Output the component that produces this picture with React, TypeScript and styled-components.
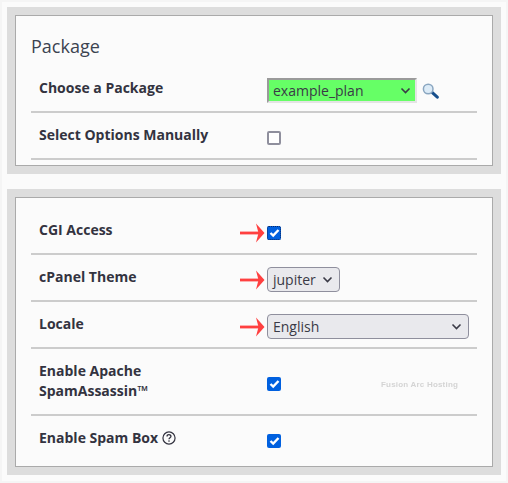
import { createGlobalStyle } from 'styled-components'
import styled from 'styled-components'
import { ReactNode } from 'react'

const GlobalStyle = createGlobalStyle`
    html, body {
        margin: 0;
        padding: 0;
        background: #fbfbfb;
    }
`

const Page = styled.div`
    position: relative;
    width: 508px;
    height: 483px;
    box-sizing: border-box;
    padding: 5px;
    border: 2px solid #f5f5f5;
    display: flex;
    flex-direction: column;
    gap: 15px;
    font-family: 'Open Sans', sans-serif;
    color: #333340;
`

const Frame = styled.div<{ $height: number }>`
    height: ${(p) => p.$height}px;
    box-sizing: border-box;
    padding: 8px;
    background: #dddddd;
`

const Panel = styled.div`
    height: 100%;
    box-sizing: border-box;
    padding: 0 15px;
    background: #fbfbfb;
    border: 1px solid #aaaaaa;
    overflow: hidden;
`

const Heading = styled.h2`
    margin: 0;
    padding: 18px 0 0;
    height: 50px;
    box-sizing: border-box;
    font-size: 18px;
    line-height: 24px;
    font-weight: 400;
    color: #3b4350;
`

const Row = styled.div<{ $height: number; $last?: boolean }>`
    height: ${(p) => p.$height}px;
    box-sizing: border-box;
    display: flex;
    border-bottom: ${(p) => (p.$last ? 'none' : '2px solid #cccccc')};
`

const Label = styled.div<{ $top?: number }>`
    width: 228px;
    margin-right: 8px;
    padding: ${(p) => p.$top ?? 12}px 30px 0 8px;
    box-sizing: border-box;
    font-size: 14px;
    line-height: 20px;
    font-weight: 700;
    color: #333340;
`

const Field = styled.div<{ $top?: number }>`
    flex: 1;
    display: flex;
    align-items: center;
    gap: 5px;
    padding-top: ${(p) => p.$top ?? 5}px;
`

const Select = styled.div<{ $width: number; $plan?: boolean }>`
    width: ${(p) => p.$width}px;
    height: 25px;
    box-sizing: border-box;
    display: flex;
    align-items: center;
    justify-content: space-between;
    padding: 0 ${(p) => (p.$plan ? 4 : 6)}px 0 ${(p) => (p.$plan ? 4 : 5)}px;
    font-size: 14px;
    color: #3a3a46;
    background: ${(p) => (p.$plan ? '#66ff66' : '#e9e9ed')};
    border-radius: ${(p) => (p.$plan ? '0' : '4px')};
    border: ${(p) => (p.$plan ? '2px solid' : '1px solid')};
    border-color: ${(p) => (p.$plan ? '#9a9a9a #e4e4e4 #e4e4e4 #9a9a9a' : '#8f8f9d')};
`

const Check = styled.span<{ $checked?: boolean; $focused?: boolean }>`
    width: 14px;
    height: 14px;
    box-sizing: border-box;
    border-radius: 2px;
    display: flex;
    align-items: center;
    justify-content: center;
    background: ${(p) => (p.$checked ? '#0060df' : '#ffffff')};
    border: ${(p) => (p.$checked ? 'none' : '2px solid #8f8f9d')};
    outline: ${(p) => (p.$focused ? '1px dotted #0a2a66' : 'none')};
    outline-offset: -1px;
`

const ArrowSlot = styled.span`
    position: absolute;
    margin-left: -27px;
    display: flex;
`

const FieldWithArrow = styled(Field)`
    position: relative;
`

const Watermark = styled.span`
    position: absolute;
    left: 379px;
    top: 378px;
    font-family: 'Liberation Sans', sans-serif;
    font-size: 8px;
    letter-spacing: 0.2px;
    font-weight: 700;
    color: #d4d4d4;
    filter: blur(0.6px);
`

const Chevron = () => (
    <svg width="11" height="7" viewBox="0 0 11 7" fill="none">
        <path d="M1.5 1.5 L5.5 5.5 L9.5 1.5" stroke="#3a3a46" strokeWidth="1.6" />
    </svg>
)

const Tick = () => (
    <svg width="11" height="10" viewBox="0 0 11 10" fill="none">
        <path d="M1.5 5 L4.2 7.6 L9.5 2" stroke="#ffffff" strokeWidth="2.4" />
    </svg>
)

const Arrow = () => (
    <svg width="25" height="20" viewBox="0 0 25 20">
        <rect x="0" y="8.6" width="19" height="2.8" fill="#ff4040" />
        <path d="M16 0.5 L24.5 10 L16 19.5 L18.5 10 Z" fill="#ff4040" />
    </svg>
)

const Magnifier = () => (
    <svg width="17" height="16" viewBox="0 0 17 16">
        <path d="M9.8 9.2 L15.3 14.2" stroke="#174f8c" strokeWidth="3" strokeLinecap="round" />
        <circle cx="6.2" cy="6" r="4.8" fill="#dcebf7" stroke="#8aa6c0" strokeWidth="1.5" />
    </svg>
)

const HelpIcon = () => (
    <svg width="14" height="14" viewBox="0 0 15 15" fill="none" style={{ verticalAlign: '-2px', marginLeft: 4 }}>
        <circle cx="7.5" cy="7.5" r="6.5" stroke="#333340" strokeWidth="1.3" />
        <path d="M5.4 5.8 C5.4 3.4 9.6 3.4 9.6 5.7 C9.6 7.2 7.5 7.2 7.5 8.9" stroke="#333340" strokeWidth="1.4" />
        <rect x="6.8" y="10" width="1.4" height="1.5" fill="#333340" />
    </svg>
)

interface ArrowFieldProps {
    top?: number
    children: ReactNode
}

const ArrowField = ({ top, children }: ArrowFieldProps) => (
    <FieldWithArrow $top={top}>
        <ArrowSlot><Arrow /></ArrowSlot>
        {children}
    </FieldWithArrow>
)

const App = () => (
    <Page>
        <GlobalStyle />
        <Frame $height={167}>
            <Panel>
                <Heading>Package</Heading>
                <Row $height={47}>
                    <Label>Choose a Package</Label>
                    <Field $top={4}>
                        <Select $width={150} $plan>example_plan<Chevron /></Select>
                        <Magnifier />
                    </Field>
                </Row>
                <Row $height={47}>
                    <Label>Select Options Manually</Label>
                    <Field><Check /></Field>
                </Row>
            </Panel>
        </Frame>
        <Frame $height={286}>
            <Panel>
                <Row $height={57}>
                    <Label $top={22}>CGI Access</Label>
                    <ArrowField top={15}><Check $checked $focused><Tick /></Check></ArrowField>
                </Row>
                <Row $height={47}>
                    <Label>cPanel Theme</Label>
                    <ArrowField top={4}><Select $width={73}>jupiter<Chevron /></Select></ArrowField>
                </Row>
                <Row $height={47}>
                    <Label>Locale</Label>
                    <ArrowField top={4}><Select $width={202}>English<Chevron /></Select></ArrowField>
                </Row>
                <Row $height={67}>
                    <Label>Enable Apache SpamAssassin™</Label>
                    <Field><Check $checked><Tick /></Check></Field>
                </Row>
                <Row $height={50} $last>
                    <Label>Enable Spam Box<HelpIcon /></Label>
                    <Field $top={0}><Check $checked><Tick /></Check></Field>
                </Row>
            </Panel>
        </Frame>
        <Watermark>Fusion Arc Hosting</Watermark>
    </Page>
)

export default App
